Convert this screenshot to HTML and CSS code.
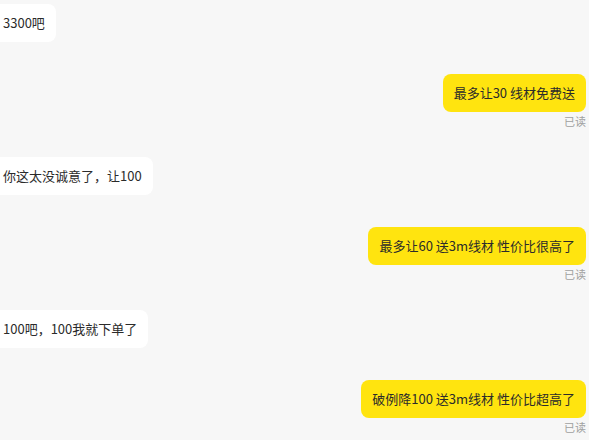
FILE: index.html
```html
<!DOCTYPE html>
<html lang="zh-CN">
<head>
<meta charset="utf-8">
<link rel="stylesheet" href="styles.css">
</head>
<body>
<div class="chat">
  <div class="row row-in"><div class="bubble bubble-in">3300吧</div></div>
  <div class="row row-out"><div class="bubble bubble-out">最多让30 线材免费送</div><div class="read">已读</div></div>
  <div class="row row-in"><div class="bubble bubble-in">你这太没诚意了，让100</div></div>
  <div class="row row-out"><div class="bubble bubble-out">最多让60 送3m线材 性价比很高了</div><div class="read">已读</div></div>
  <div class="row row-in"><div class="bubble bubble-in">100吧，100我就下单了</div></div>
  <div class="row row-out"><div class="bubble bubble-out">破例降100 送3m线材 性价比超高了</div><div class="read">已读</div></div>
</div>
</body>
</html>
```

FILE: styles.css
```css
html, body {
  margin: 0;
  padding: 0;
  background: #f7f7f7;
  width: 589px;
  height: 440px;
  overflow: hidden;
}
.chat {
  display: flex;
  flex-direction: column;
  padding: 4px 3px 0 0;
  font-family: "Noto Sans CJK SC", "Microsoft YaHei", sans-serif;
  font-size: 13px;
  color: #2b2b2b;
}
.row {
  display: flex;
  flex-direction: column;
}
.row-in {
  align-items: flex-start;
  margin-bottom: 32px;
}
.row-out {
  align-items: flex-end;
  margin-bottom: 29px;
}
.bubble {
  height: 38px;
  line-height: 38px;
  padding: 0 11px;
  border-radius: 8px;
  white-space: nowrap;
  box-sizing: border-box;
}
.bubble-in {
  background: #ffffff;
  margin-left: -8px;
}
.bubble-out {
  background: #ffe40f;
}
.read {
  margin-top: 2px;
  line-height: 14px;
  font-size: 11px;
  color: #a0a0a0;
}
```
